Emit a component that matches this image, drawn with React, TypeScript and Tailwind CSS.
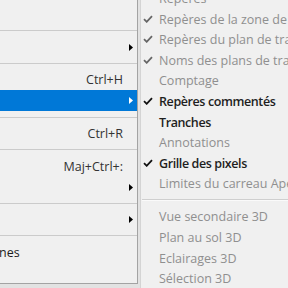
import React from "react";

const Check = ({ c }: { c: string }) => (
  <svg width="10" height="8" viewBox="0 0 10 8">
    <path d="M1 4.2 L3.7 6.8 L9 1.2" fill="none" stroke={c} strokeWidth="1.8" />
  </svg>
);

const Arrow = ({ c }: { c: string }) => (
  <svg width="4" height="7" viewBox="0 0 4 7">
    <path d="M0 0 L4 3.5 L0 7Z" fill={c} />
  </svg>
);

const LSep = () => (
  <div className="h-[11.3px] shrink-0 flex flex-col justify-center">
    <div className="h-px bg-[#cbcbcb]" />
  </div>
);

const LRow = ({
  shortcut,
  arrow,
  active,
  label,
}: {
  shortcut?: string;
  arrow?: boolean;
  active?: boolean;
  label?: string;
}) => (
  <div
    className={
      active
        ? "h-[21.2px] shrink-0 flex items-center pt-[2px] bg-[#0078d7] text-white"
        : "h-[21.2px] shrink-0 flex items-center pt-[2px] text-[#1b1b1b]"
    }
  >
    {label ? <span className="ml-[-1px]">{label}</span> : null}
    <div className="flex-1" />
    {shortcut ? <span className="text-[#333333]">{shortcut}</span> : null}
    <div className="w-[14px] shrink-0 pr-[4px] pb-[2px] flex justify-end">
      {arrow ? <Arrow c={active ? "#ffffff" : "#000000"} /> : null}
    </div>
  </div>
);

const RSep = () => (
  <div className="h-[12.5px] shrink-0 flex flex-col justify-center pl-[1px]">
    <div className="h-px bg-[#cfcfcf]" />
    <div className="h-px bg-[#fafafa]" />
  </div>
);

const RRow = ({
  text,
  checked,
  enabled,
}: {
  text: string;
  checked?: boolean;
  enabled?: boolean;
}) => (
  <div className="h-[20.6px] shrink-0 flex items-center whitespace-nowrap">
    <div className="w-[18px] shrink-0 pl-[2px] flex items-center">
      {checked ? <Check c={enabled ? "#111111" : "#666666"} /> : null}
    </div>
    <span
      className={
        enabled
          ? "pt-[2px] font-semibold tracking-[-0.4px] text-[#1e1e1e]"
          : "pt-[2px] text-[#8f8f8f]"
      }
    >
      {text}
    </span>
  </div>
);

export default function App() {
  return (
    <div
      className="flex h-[288px] w-[288px] overflow-hidden bg-[#e2e2e2] text-[12.5px] leading-none"
      style={{ fontFamily: '"Open Sans", "Noto Sans", sans-serif' }}
    >
      <div className="w-[138px] h-[284px] shrink-0 flex flex-col bg-[#f0f0f0] border-r border-b border-[#a3a3a3] overflow-hidden">
        <div className="h-[25.3px] shrink-0" />
        <LSep />
        <LRow arrow />
        <LSep />
        <LRow shortcut="Ctrl+H" />
        <LRow arrow active />
        <LSep />
        <LRow shortcut="Ctrl+R" />
        <LSep />
        <LRow shortcut="Maj+Ctrl+:" />
        <LRow arrow />
        <LSep />
        <LRow arrow />
        <LSep />
        <LRow label="nes" />
        <LRow />
      </div>
      <div className="ml-[2px] flex-1 flex flex-col bg-[#f0f0f0] border-l border-[#d4d4d4] overflow-hidden">
        <div className="mt-[-12px] flex flex-col">
          <RRow text="Repères" />
          <RRow text="Repères de la zone de travail" checked />
          <RRow text="Repères du plan de travail" checked />
          <RRow text="Noms des plans de travail" checked />
          <RRow text="Comptage" />
          <RRow text="Repères commentés" checked enabled />
          <RRow text="Tranches" enabled />
          <RRow text="Annotations" />
          <RRow text="Grille des pixels" checked enabled />
          <RRow text="Limites du carreau Aperçu" />
          <RSep />
          <RRow text="Vue secondaire 3D" />
          <RRow text="Plan au sol 3D" />
          <RRow text="Eclairages 3D" />
          <RRow text="Sélection 3D" />
        </div>
      </div>
    </div>
  );
}
